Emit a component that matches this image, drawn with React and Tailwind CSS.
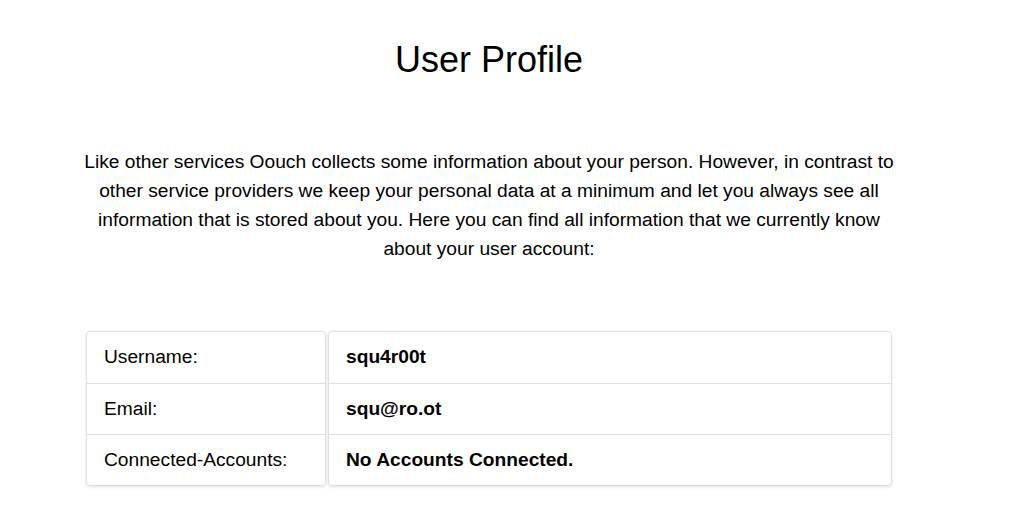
import React from 'react';

export default function App() {
  const rows = [
    { label: 'Username:', value: 'squ4r00t' },
    { label: 'Email:', value: 'squ@ro.ot' },
    { label: 'Connected-Accounts:', value: 'No Accounts Connected.' },
  ];

  return (
    <div className="min-h-screen bg-white text-black font-['Liberation_Sans',Arial,sans-serif]">
      <div className="ml-[86px] w-[806px] pt-[40px]">
        {/* Title */}
        <h1 className="text-center text-[36px] leading-[40px] font-normal">User Profile</h1>

        {/* Intro */}
        <p className="mt-[67px] -mx-[4px] text-center text-[19.2px] leading-[29px]">
          Like other services Oouch collects some information about your person. However, in contrast to
          other service providers we keep your personal data at a minimum and let you always see all
          information that is stored about you. Here you can find all information that we currently know
          about your user account:
        </p>

        {/* Table */}
        <div className="mt-[68px] flex gap-[2px]">
          <div className="w-[240px] rounded border border-[#e0e0e0] shadow-[0_1px_3px_rgba(0,0,0,0.12)]">
            {rows.map((r, i) => (
              <div
                key={r.label}
                className={`h-[51px] flex items-center pl-[17px] text-[19.2px] ${i > 0 ? 'border-t border-[#e0e0e0]' : ''}`}
              >
                {r.label}
              </div>
            ))}
          </div>
          <div className="flex-1 rounded border border-[#e0e0e0] shadow-[0_1px_3px_rgba(0,0,0,0.12)]">
            {rows.map((r, i) => (
              <div
                key={r.label}
                className={`h-[51px] flex items-center pl-[17px] text-[19.2px] font-bold ${i > 0 ? 'border-t border-[#e0e0e0]' : ''}`}
              >
                {r.value}
              </div>
            ))}
          </div>
        </div>
      </div>
    </div>
  );
}
